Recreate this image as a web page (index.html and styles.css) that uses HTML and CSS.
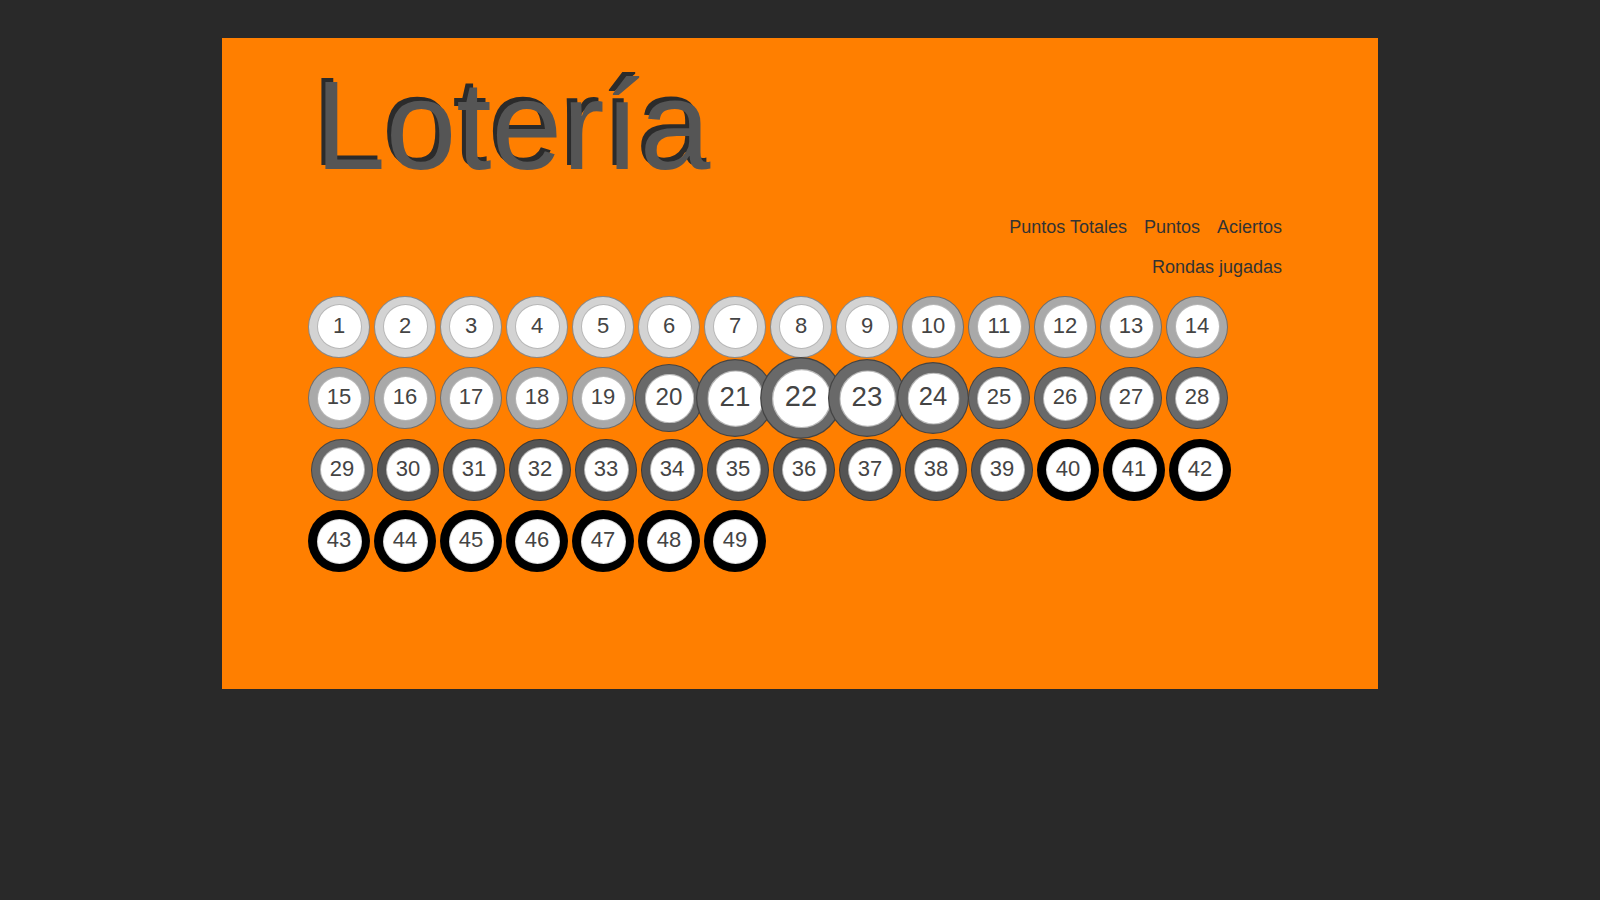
FILE: index.html
```html
<!DOCTYPE html>
<html lang="es">
<head>
<meta charset="utf-8">
<title>Lotería</title>
<link rel="stylesheet" href="styles.css">
</head>
<body>
<main class="panel">
  <h1 class="title">Lotería</h1>
  <section class="stats">
    <div class="stats-row">
      <span>Puntos Totales</span>
      <span>Puntos</span>
      <span>Aciertos</span>
    </div>
    <div class="stats-row">
      <span>Rondas jugadas</span>
    </div>
  </section>
  <section class="balls">
    <div class="ball g0"><span>1</span></div>
    <div class="ball g0"><span>2</span></div>
    <div class="ball g0"><span>3</span></div>
    <div class="ball g0"><span>4</span></div>
    <div class="ball g0"><span>5</span></div>
    <div class="ball g0"><span>6</span></div>
    <div class="ball g0"><span>7</span></div>
    <div class="ball g0"><span>8</span></div>
    <div class="ball g0"><span>9</span></div>
    <div class="ball g1"><span>10</span></div>
    <div class="ball g1"><span>11</span></div>
    <div class="ball g1"><span>12</span></div>
    <div class="ball g1"><span>13</span></div>
    <div class="ball g1"><span>14</span></div>
    <div class="ball g1"><span>15</span></div>
    <div class="ball g1"><span>16</span></div>
    <div class="ball g1"><span>17</span></div>
    <div class="ball g1"><span>18</span></div>
    <div class="ball g1"><span>19</span></div>
    <div class="ball g2 zoom-1"><span>20</span></div>
    <div class="ball g2 zoom-3"><span>21</span></div>
    <div class="ball g2 zoom-4"><span>22</span></div>
    <div class="ball g2 zoom-3"><span>23</span></div>
    <div class="ball g2 zoom-2"><span>24</span></div>
    <div class="ball g2"><span>25</span></div>
    <div class="ball g2"><span>26</span></div>
    <div class="ball g2"><span>27</span></div>
    <div class="ball g2"><span>28</span></div>
    <div class="ball g2 row-start"><span>29</span></div>
    <div class="ball g3"><span>30</span></div>
    <div class="ball g3"><span>31</span></div>
    <div class="ball g3"><span>32</span></div>
    <div class="ball g3"><span>33</span></div>
    <div class="ball g3"><span>34</span></div>
    <div class="ball g3"><span>35</span></div>
    <div class="ball g3"><span>36</span></div>
    <div class="ball g3"><span>37</span></div>
    <div class="ball g3"><span>38</span></div>
    <div class="ball g3"><span>39</span></div>
    <div class="ball g4"><span>40</span></div>
    <div class="ball g4"><span>41</span></div>
    <div class="ball g4"><span>42</span></div>
    <div class="ball g4"><span>43</span></div>
    <div class="ball g4"><span>44</span></div>
    <div class="ball g4"><span>45</span></div>
    <div class="ball g4"><span>46</span></div>
    <div class="ball g4"><span>47</span></div>
    <div class="ball g4"><span>48</span></div>
    <div class="ball g4"><span>49</span></div>
  </section>
</main>
</body>
</html>
```

FILE: styles.css
```css
html, body {
  margin: 0;
  padding: 0;
}

body {
  background: #292929;
  font-family: "Liberation Sans", Arial, sans-serif;
  min-height: 900px;
  overflow: hidden;
}

.panel {
  box-sizing: border-box;
  width: 1156px;
  height: 651px;
  margin: 38px auto 0;
  padding: 12px 86px 0;
  background: #ff7f00;
}

.title {
  margin: 0 0 0 7px;
  font-size: 127px;
  line-height: 150px;
  font-weight: normal;
  color: #555555;
  text-shadow: -4px -4px 0 #2b2b2b;
}

.stats {
  margin-top: 7px;
  padding-right: 10px;
  color: #333333;
  font-size: 18px;
}

.stats-row {
  display: flex;
  justify-content: flex-end;
  gap: 17px;
  line-height: 40px;
}

.balls {
  display: flex;
  flex-wrap: wrap;
  column-gap: 4px;
  row-gap: 9.5px;
  margin-top: 8.5px;
}

.ball {
  box-sizing: border-box;
  width: 62px;
  height: 62px;
  border-radius: 50%;
  border: 1px solid rgba(0, 0, 0, 0.35);
  display: flex;
  align-items: center;
  justify-content: center;
}

.ball span {
  box-sizing: border-box;
  width: 45px;
  height: 45px;
  border-radius: 50%;
  background: #ffffff;
  border: 1px solid rgba(0, 0, 0, 0.28);
  display: flex;
  align-items: center;
  justify-content: center;
  font-size: 22px;
  color: #444444;
  padding-bottom: 2px;
}

.g0 { background: #d3d3d3; }
.g1 { background: #a9a9a9; }
.g2 { background: #696969; }
.g3 { background: #545454; }
.g4 { background: #000000; }
.g4 span { border-color: rgba(0, 0, 0, 0.15); }

.row-start { margin-left: 3px; }

.zoom-1 { transform: scale(1.1); }
.zoom-2 { transform: scale(1.16); }
.zoom-3 { transform: scale(1.26); }
.zoom-4 { transform: scale(1.32); }
```
